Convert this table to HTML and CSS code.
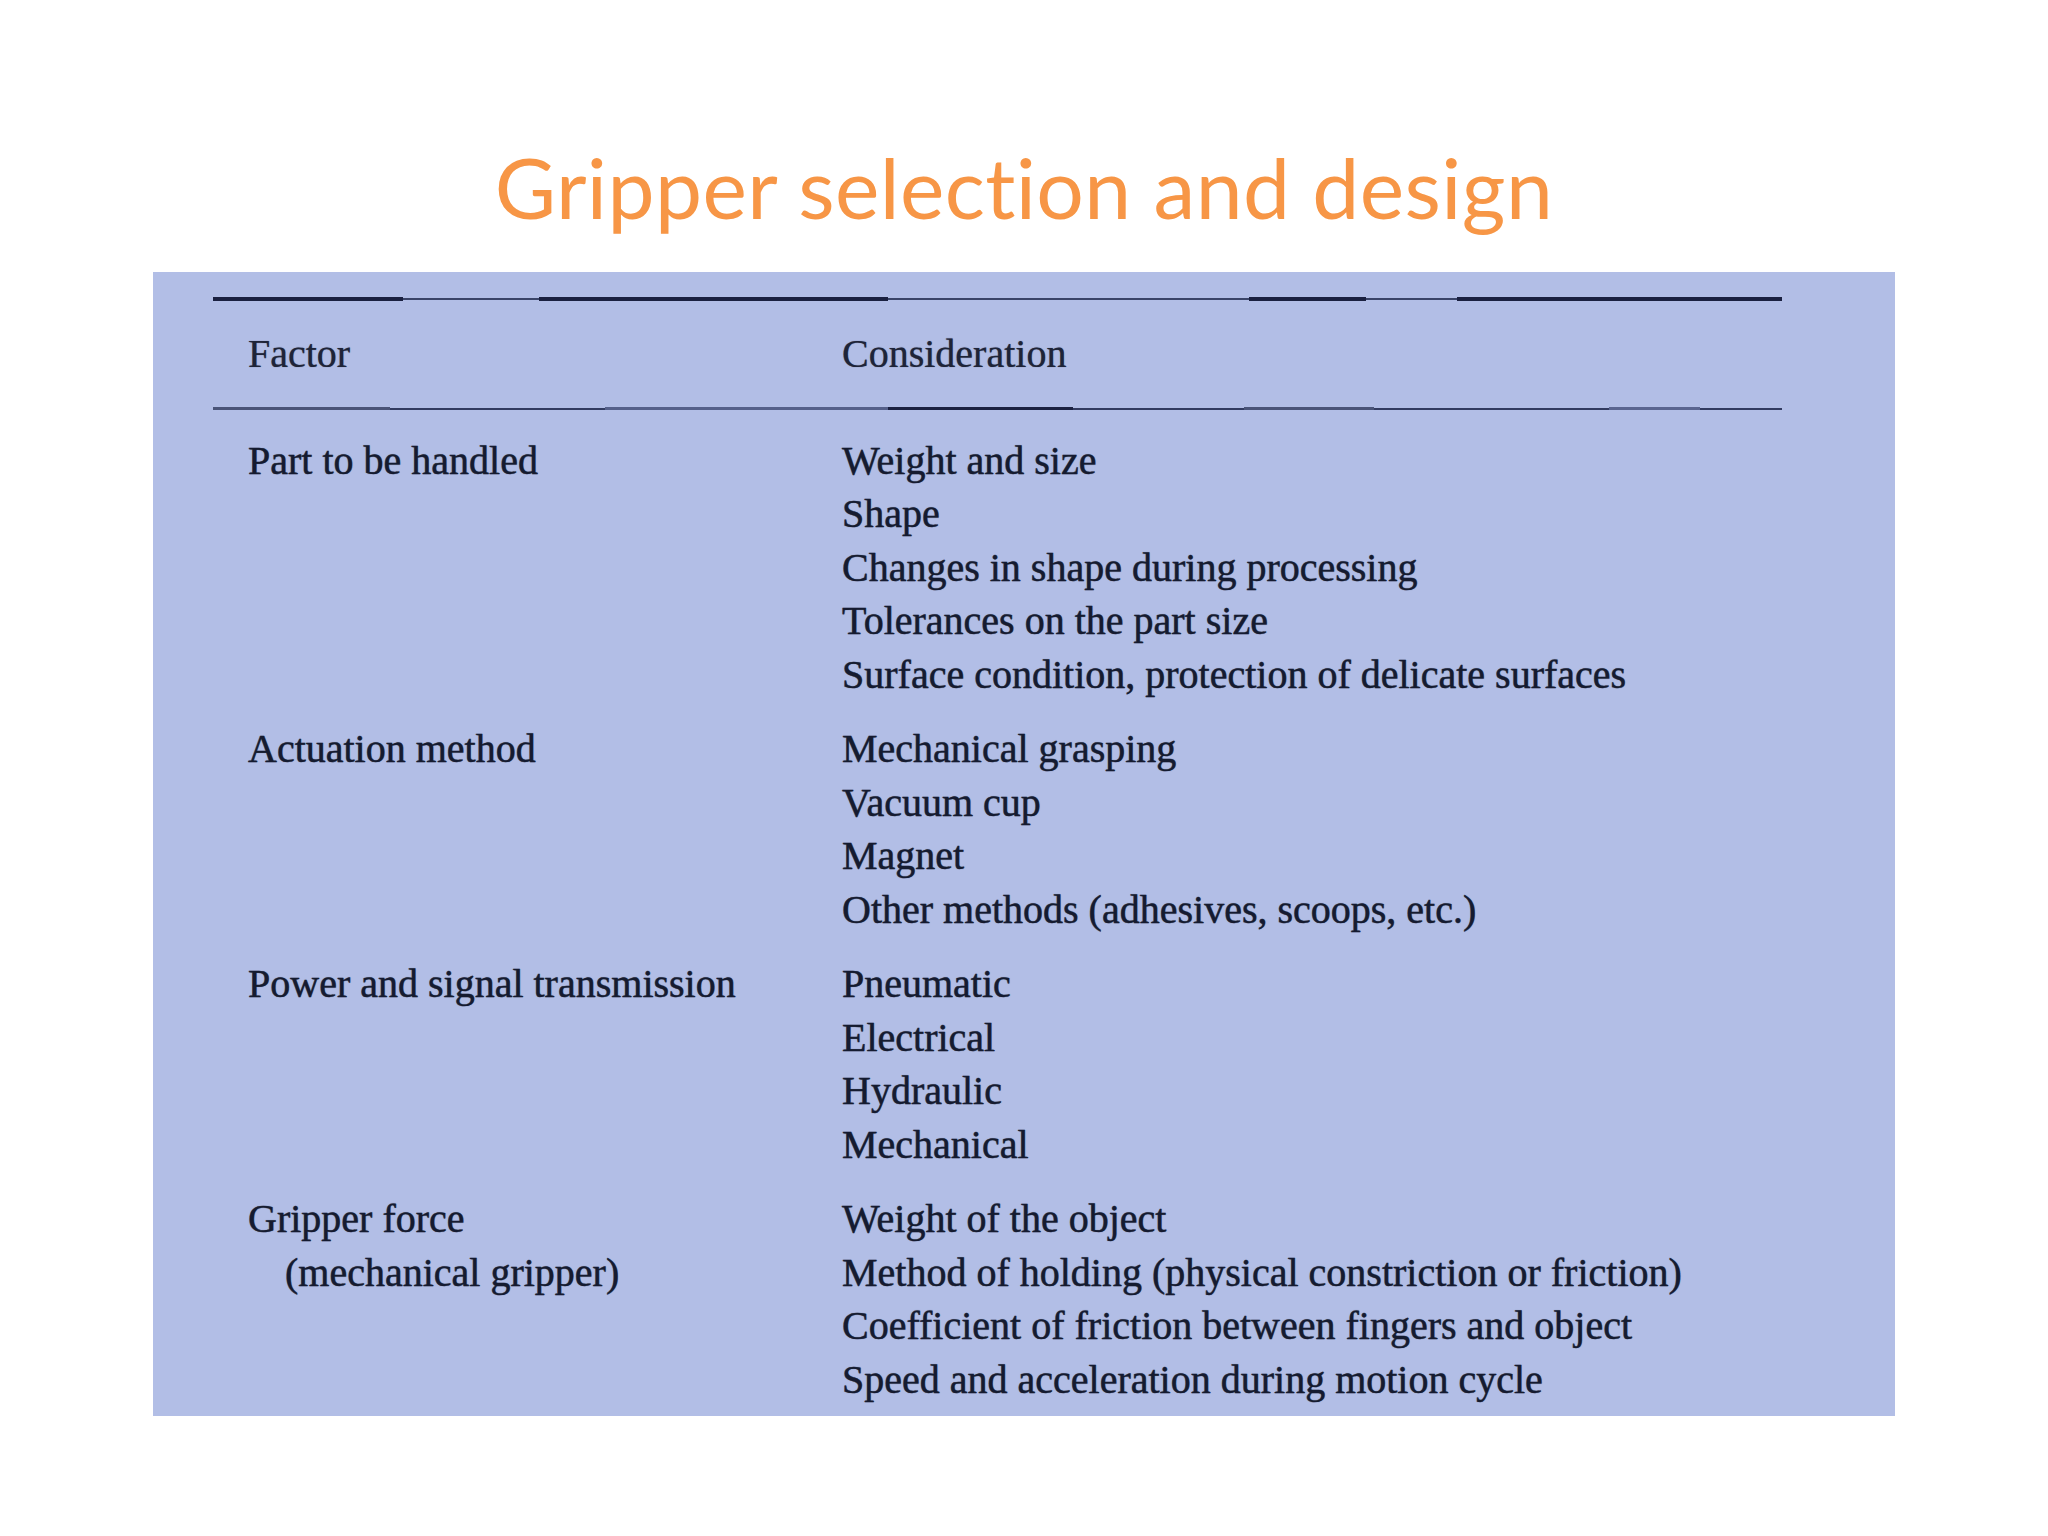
FILE: index.html
```html
<!DOCTYPE html>
<html lang="en">
<head>
<meta charset="utf-8">
<title>Gripper selection and design</title>
<link rel="stylesheet" href="styles.css">
</head>
<body>
<div class="slide">
  <h1 class="title">Gripper selection and design</h1>
  <div class="panel">
    <div class="table">
      <div class="rule rule-top"></div>
      <div class="row head">
        <div class="factor">Factor</div>
        <div class="cons">Consideration</div>
      </div>
      <div class="rule rule-mid"></div>
      <div class="body">
        <div class="row group">
          <div class="factor">Part to be handled</div>
          <div class="cons">
            <div>Weight and size</div>
            <div>Shape</div>
            <div>Changes in shape during processing</div>
            <div>Tolerances on the part size</div>
            <div>Surface condition, protection of delicate surfaces</div>
          </div>
        </div>
        <div class="row group">
          <div class="factor">Actuation method</div>
          <div class="cons">
            <div>Mechanical grasping</div>
            <div>Vacuum cup</div>
            <div>Magnet</div>
            <div>Other methods (adhesives, scoops, etc.)</div>
          </div>
        </div>
        <div class="row group">
          <div class="factor">Power and signal transmission</div>
          <div class="cons">
            <div>Pneumatic</div>
            <div>Electrical</div>
            <div>Hydraulic</div>
            <div>Mechanical</div>
          </div>
        </div>
        <div class="row group">
          <div class="factor">
            <div>Gripper force</div>
            <div class="indent">(mechanical gripper)</div>
          </div>
          <div class="cons">
            <div>Weight of the object</div>
            <div>Method of holding (physical constriction or friction)</div>
            <div>Coefficient of friction between fingers and object</div>
            <div>Speed and acceleration during motion cycle</div>
          </div>
        </div>
      </div>
    </div>
  </div>
</div>
</body>
</html>
```
FILE: styles.css
```css
html, body {
  margin: 0;
  padding: 0;
  background: #ffffff;
}

.slide {
  width: 2048px;
  height: 1536px;
  background: #ffffff;
  overflow: hidden;
}

.title {
  margin: 0;
  padding-top: 145px;
  height: 84px;
  margin-bottom: 43px;
  font-family: Lato, "Open Sans", sans-serif;
  font-weight: 400;
  font-size: 84px;
  line-height: 84px;
  color: #F79646;
  text-align: center;
  letter-spacing: 0.4px;
}

.panel {
  width: 1742px;
  height: 1144px;
  margin: 0 auto;
  background: #B2BEE6;
  overflow: hidden;
}

.table {
  margin-left: 60px;
  width: 1569px;
  padding-top: 25px;
  font-family: "Liberation Serif", "Times New Roman", serif;
  font-size: 40px;
  line-height: 53.5px;
  color: #151b30;
  -webkit-text-stroke: 0.35px #151b30;
  text-shadow: 0 0 1px rgba(20, 26, 50, 0.55);
}

.rule {
  width: 100%;
  background-repeat: no-repeat;
}

.rule-top {
  height: 4px;
  background-image:
    linear-gradient(to right,
      #1a2040 0%, #1a2040 12.1%,
      transparent 12.1%, transparent 20.8%,
      #1a2040 20.8%, #1a2040 43%,
      transparent 43%, transparent 66%,
      #1a2040 66%, #1a2040 73.5%,
      transparent 73.5%, transparent 79.3%,
      #1a2040 79.3%, #1a2040 100%),
    linear-gradient(#3a4468, #3a4468);
  background-size: 100% 4px, 100% 2px;
  background-position: 0 0, 0 1px;
}

.rule-mid {
  height: 3px;
  background-image:
    linear-gradient(to right,
      #4a5478 0%, #4a5478 11.3%,
      transparent 11.3%, transparent 25%,
      #55608a 25%, #55608a 43%,
      #1c2242 43%, #1c2242 54.8%,
      transparent 54.8%, transparent 65.7%,
      #4a5478 65.7%, #4a5478 74%,
      transparent 74%, transparent 89%,
      #5a6590 89%, #5a6590 94.8%,
      transparent 94.8%, transparent 100%),
    linear-gradient(#323b60, #323b60);
  background-size: 100% 3px, 100% 2px;
  background-position: 0 0, 0 1px;
}

.row {
  display: grid;
  grid-template-columns: 629px 1fr;
}

.factor {
  padding-left: 35px;
}

.head {
  padding-top: 26px;
  padding-bottom: 26px;
  color: #1e2438;
}

.head .factor,
.head .cons {
  -webkit-text-stroke: 0.15px #1e2438;
}

.body {
  padding-top: 24px;
}

.group {
  margin-bottom: 21px;
}

.indent {
  padding-left: 37px;
}
```
